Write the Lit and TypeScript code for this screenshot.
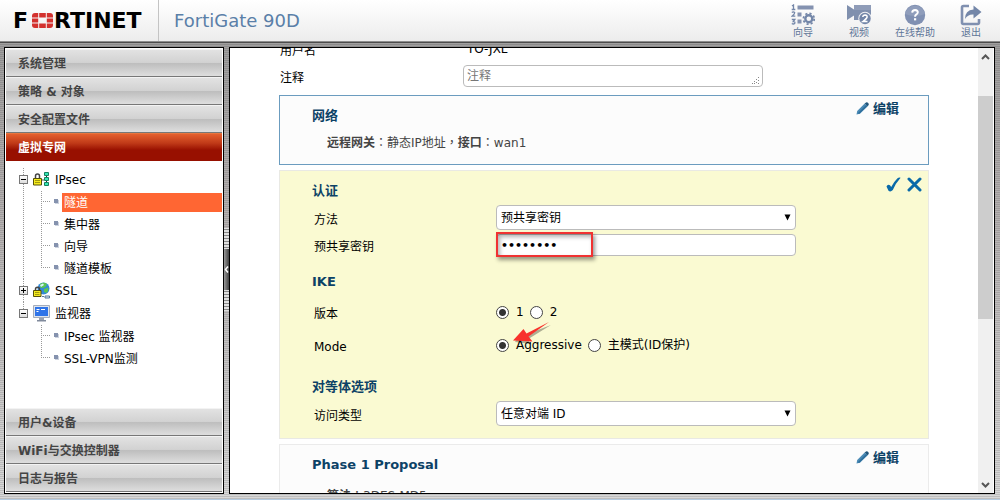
import { LitElement, html, css, svg, nothing } from "lit";
import { customElement, state } from "lit/decorators.js";
import { classMap } from "lit/directives/class-map.js";

const wizardIcon = svg`<svg viewBox="0 0 24 22" width="24" height="22">
  <path d="M6.5 1.5h16v4h-16zM6.5 8.500h4v4h-4zM6.500 15.500h4v4h-4z" fill="#8492b0"/>
  <g fill="none" stroke="#7386a8" stroke-width="1.300">
    <path d="M1 2l1.500-1v4.700M.7 5.500h3.600"/>
    <path d="M.8 8.500q1.500-1.200 2.800 0q.5 1.200-2.600 3.700h3.300"/>
    <path d="M.8 15.500h3l-1.500 2q2 0 1.500 1.700q-1.300 1.500-3 .2"/>
  </g>
  <circle cx="17.800" cy="14.800" r="3.500" fill="none" stroke="#7386a8" stroke-width="2.400"/>
  <circle cx="17.800" cy="14.800" r="5.400" fill="none" stroke="#7386a8" stroke-width="1.800" stroke-dasharray="2.120 2.120"/>
</svg>`;

const videoIcon = svg`<svg viewBox="0 0 24 22" width="24" height="22">
  <path d="M0 1l7 4.500V1h17v15H7v-4.500L0 16z" fill="#8090ae"/>
  <path d="M7 1h17v5H7z" fill="#8f9cb8"/>
  <circle cx="18" cy="14.500" r="6.700" fill="#f2f2f4"/>
  <circle cx="18" cy="14.500" r="5.700" fill="#7386a8"/>
  <path d="M15.800 13q.2-2 2.300-2q2.200.2 2 2q-.3 1.500-4.200 4.500h4.600" fill="none" stroke="#fff" stroke-width="1.500"/>
</svg>`;

const helpIcon = svg`<svg viewBox="0 0 22 22" width="22" height="22">
  <circle cx="11" cy="11" r="10.200" fill="#8090b2"/>
  <path d="M1 10a10.200 10.200 0 0 1 20 0q-10 4-20 0z" fill="#8f9dbb"/>
  <path d="M8.200 8.600q.1-2.700 2.900-2.700q2.700.1 2.700 2.400q-.1 1.500-1.700 2.400q-1 .6-1 2" fill="none" stroke="#fff" stroke-width="2"/>
  <path d="M10 14.200h2.200v2.200H10z" fill="#fff"/>
</svg>`;

const exitIcon = svg`<svg viewBox="0 0 22 22" width="22" height="22">
  <path d="M9 2H3.500Q2 2 2 3.500v15Q2 20 3.500 20h14q1.500 0 1.500-1.500V15" fill="none" stroke="#8090b0" stroke-width="2.600"/>
  <path d="M5 15Q5 6 13.500 5.500V1.500L21.500 8l-8 6.500V10.500Q8 10 5 15z" fill="#7386a8"/>
</svg>`;

const pencil = svg`<svg viewBox="0 0 13 13" width="13" height="13">
  <path d="M0.500 12.500L1.200 9L8.700 1.500L11.500 4.300L4 11.800z" fill="#4a8ab5"/>
  <path d="M3 12L11.500 4.300L10 3L2 11z" fill="#2f6f9c"/>
  <path d="M8.700 1.500L10 .5Q11.200 0 12.200 1Q13.200 2.200 12.500 3.200L11.500 4.300z" fill="#20557a"/>
</svg>`;

const ipsecIcon = svg`<svg viewBox="0 0 17 17" width="17" height="17">
  <path d="M2.500 7.500V5q0-2 2-2t2 2v2.500" fill="none" stroke="#444" stroke-width="1.500"/>
  <path d="M.5 7.500h8v6.500h-8z" fill="#f5ea1c" stroke="#55500a"/>
  <path d="M2 9.500h5M2 11.500h5" stroke="#a19a10"/>
  <path d="M9 9h2" stroke="#555"/>
  <path d="M11.500 1.500h4v3h-4zM11.500 6.500h4v3h-4zM11.500 11.500h4v3h-4z" fill="#35e6b4" stroke="#16805f"/>
  <path d="M13.500 5v1M13.500 10v1" stroke="#333"/>
</svg>`;

const sslIcon = svg`<svg viewBox="0 0 17 17" width="17" height="17">
  <circle cx="10.500" cy="6.500" r="6" fill="#328bd9"/>
  <path d="M7 2q4-2.500 7 0l-1 2.500-3 1.500-3-.5zM11 7l4-1.500q1 3-1.500 5.500L11 10z" fill="#5ac553"/>
  <path d="M7 3l3-1.500 1 1.500-3 2z" fill="#d8f2ff"/>
  <path d="M2.500 8.500V7.300q0-2 2-2t2 2v1.200" fill="none" stroke="#444" stroke-width="1.500"/>
  <path d="M.5 8.500h7.500v6H.5z" fill="#f5ea1c" stroke="#55500a"/>
  <path d="M2 10.500h4.500M2 12.500h4.500" stroke="#a19a10"/>
  <path d="M9 14.500h2m1-.5h4.500v2H12z" stroke="#56799c" fill="#dce8f5"/>
</svg>`;

const monitorIcon = svg`<svg viewBox="0 0 17 17" width="17" height="17">
  <path d="M.5 .5h16v12H.5z" fill="#dfe4ec" stroke="#a5adbb"/>
  <path d="M2 2h13v9H2z" fill="#2f74e8"/>
  <path d="M3.500 4.500h3M8 4.500h4M3.500 6.500h2" stroke="#fff"/>
  <path d="M6 13h5v2H6z" fill="#9aa2b2"/>
  <path d="M4 15h9v1.500H4z" fill="#808a9c"/>
</svg>`;

const check = svg`<svg viewBox="0 0 15 15" width="15" height="15">
  <path d="M.5 9.500Q1.500 7 4 8.200L5.200 10Q8 4.500 11.500 1.200Q13 .2 14.600 .8Q9.500 6.500 6.800 13Q4.500 15.500 2.500 13.700z" fill="#0a6aa8"/>
</svg>`;

const cross = svg`<svg viewBox="0 0 15 15" width="15" height="15">
  <path d="M2 2L13 13M13 2L2 13" stroke="#0a6aa8" stroke-width="3" stroke-linecap="round"/>
</svg>`;

const gridMark = svg`<svg viewBox="0 0 21 15" width="21" height="15">
  <g fill="#d3312e">
    <path d="M0 4.400V3Q0 0 3 0h3.200v4.400zM7.200 0h6.600v4.400H7.200zM14.800 0H18q3 0 3 3v1.400h-6.200z"/>
    <path d="M0 5.400h6.200v4.200H0zM14.800 5.400H21v4.200h-6.200z"/>
    <path d="M0 10.600h6.200V15H3q-3 0-3-3zM7.200 10.600h6.600V15H7.200zM14.800 10.600H21V12q0 3-3 3h-3.200z"/>
  </g>
</svg>`;

interface Branch {
  label: string;
  icon: unknown;
  open: boolean;
  leaves: string[];
}

@customElement("app-root")
export class AppRoot extends LitElement {
  @state() private selected = "隧道";

  private branches: Branch[] = [
    { label: "IPsec", icon: ipsecIcon, open: true, leaves: ["隧道", "集中器", "向导", "隧道模板"] },
    { label: "SSL", icon: sslIcon, open: false, leaves: [] },
    { label: "监视器", icon: monitorIcon, open: true, leaves: ["IPsec 监视器", "SSL-VPN监测"] },
  ];

  static styles = css`
    :host {
      display: flex;
      flex-direction: column;
      height: 100vh;
      box-sizing: border-box;
      overflow: hidden;
      font: 12px/20px "DejaVu Sans", "Noto Sans CJK SC", sans-serif;
      color: #000;
      border-bottom: 1px solid #b5cbe0;
      background:
        repeating-linear-gradient(rgba(0, 0, 0, 0.12) 0 1px, transparent 1px 2px),
        linear-gradient(#9a9a9a, #b4b0b0 40%, #d8d8d8);
    }
    * { box-sizing: border-box; }
    svg { display: block; flex: none; }
    button, input, select, textarea { font: inherit; color: inherit; margin: 0; }
    button { border: 0; background: none; padding: 0; cursor: pointer; text-align: left; }
    a { color: inherit; text-decoration: none; }

    header {
      display: flex;
      flex: none;
      height: 43px;
      background: linear-gradient(#fff, #ececec);
      border-bottom: 1px solid #4c4c4c;
      box-shadow: inset 0 -1px #8d8d8d;
    }
    .logo {
      display: flex;
      align-items: center;
      width: 159px;
      padding-left: 13px;
      border-right: 1px solid #c4c4c4;
      margin-bottom: 1px;
      font-size: 22px;
      font-weight: bold;
    }
    .logo svg { margin: 0 1px 0 4px; }
    .product { padding-left: 15px; font-size: 18px; line-height: 41px; color: #5a7fa8; flex: 1; }
    .tools { display: flex; padding-right: 1px; }
    .tool {
      display: flex;
      flex-direction: column;
      align-items: center;
      width: 56px;
      padding-top: 4px;
      font-size: 10px;
      line-height: 14px;
      color: #5f7698;
    }

    .body { display: flex; flex: 1; min-height: 0; padding: 4px 5px 5px 4px; }
    nav {
      display: flex;
      flex-direction: column;
      width: 220px;
      padding: 1px;
      background: #fff;
      border: 1px solid #000;
    }
    .section {
      flex: none;
      height: 28px;
      padding: 2px 0 0 12px;
      font-weight: bold;
      color: #444;
      border-top: 1px solid #f3f3f3;
      border-bottom: 1px solid #777;
      background: linear-gradient(#e2e2e2, #d2d2d2 48%, #bebebe 52%, #dedede);
    }
    .section.current {
      color: #fff;
      border-top-color: #e8753e;
      border-bottom-color: #961000;
      background: linear-gradient(#e4602f, #c03a18 35%, #981000 62%);
    }
    .tree { flex: 1; margin: 0; padding: 7px 0 0 13px; list-style: none; }
    .tree > li {
      background: repeating-linear-gradient(#999 0 1px, transparent 1px 2px) 4px 0 / 1px 100% no-repeat;
    }
    .tree > li:last-child { background-size: 1px 10px; }
    .branch { display: flex; align-items: center; height: 23px; }
    .toggle {
      position: relative;
      width: 9px;
      height: 9px;
      border: 1px solid #777;
      background: linear-gradient(#fff, #ddd);
    }
    .toggle::before, .toggle.plus::after {
      content: "";
      position: absolute;
      left: 1px;
      top: 3px;
      width: 5px;
      height: 1px;
      background: #000;
    }
    .toggle.plus::after { left: 3px; top: 1px; width: 1px; height: 5px; }
    .branch svg { margin: 0 5px 0 5px; }
    .leaves {
      margin: 0 0 0 22px;
      padding: 0;
      list-style: none;
      background: repeating-linear-gradient(#999 0 1px, transparent 1px 2px) 0 0 / 1px calc(100% - 12px) no-repeat;
    }
    .leaf { display: flex; align-items: center; height: 22px; }
    .leaf::before {
      content: "";
      width: 9px;
      height: 1px;
      margin-bottom: 2px;
      background: repeating-linear-gradient(90deg, #999 0 1px, transparent 1px 2px);
    }
    .leaf::after {
      content: "";
      order: 1;
      width: 4px;
      height: 4px;
      margin: 0 4px 3px 4px;
      background: #8592ae;
      box-shadow: 1px 1px #ccd2de;
    }
    .leaf a { order: 2; flex: 1; padding: 1px 0 0 2px; line-height: 18px; }
    .leaf a.on { background: #ff6633; color: #fff; }

    .splitter {
      display: flex;
      flex-direction: column;
      align-items: stretch;
      justify-content: center;
      width: 5px;
      padding-bottom: 2px;
    }
    .grip {
      height: 21px;
      background: radial-gradient(circle, #888 0.8px, transparent 1px) 0 0 / 2px 3px, #e0e0e0;
    }
    .collapse {
      display: flex;
      align-items: center;
      height: 41px;
      background: linear-gradient(90deg, #999, #444);
    }

    main { display: flex; flex: 1; min-width: 0; background: #fff; border: 1px solid #000; overflow: hidden; }
    .content { flex: 1; min-width: 0; padding: 0 49px; }
    .top { margin: -10px 0 8px; padding-left: 1px; }
    .row { display: grid; grid-template-columns: 182px minmax(0, 300px); align-items: center; min-height: 22px; }
    .top .row { grid-template-columns: 183px minmax(0, 300px); }
    .top .row + .row { margin-top: 5px; }
    .row > .name { padding-top: 4px; line-height: 18px; }
    .value { padding-left: 4px; }
    .field { position: relative; display: block; }
    .field input, .field select, .field textarea {
      display: block;
      width: 100%;
      height: 22px;
      padding: 0 4px;
      border: 1px solid #bbb;
      border-radius: 4px;
      background: #fff;
      outline: none;
      appearance: none;
    }
    .field input[type="password"] { font-size: 11px; font-weight: bold; }
    .field textarea { resize: none; overflow: hidden; padding: 0 3px; }
    .field textarea::placeholder { color: #777; opacity: 1; }
    .field select { height: 25px; }
    .field svg { position: absolute; right: 5px; top: 9px; }
    .field .corner { right: 3px; top: 12px; }

    .card { position: relative; margin-bottom: 5px; padding: 10px 32px 11px; border: 1px solid #ebebeb; background: #fcfcfc; }
    .card.focus { border-color: #6b9cbf; }
    .card.editing { background: #fafad2; padding-bottom: 12px; border-color: #e9e9e4; }
    h2 { margin: 0; font-size: 13px; line-height: 20px; color: #0c4266; }
    .summary { margin: 7px 0 0 15px; color: #444; }
    .summary.list { margin-top: 11px; }
    .punct { font-family: "Noto Sans CJK TC", sans-serif; line-height: 1; }
    .edit {
      position: absolute;
      top: 3px;
      right: 29px;
      display: flex;
      align-items: center;
      gap: 4px;
      font-size: 13px;
      font-weight: bold;
      color: #0c4266;
    }
    .edit svg { margin-bottom: 2px; }
    .actions { position: absolute; top: 6px; right: 6px; display: flex; gap: 6px; }
    .form { padding-left: 2px; }
    .form .row + .row { margin-top: 4px; }
    .form.select-first { margin-top: 4px; }
    .form.radios { margin-top: 8px; }
    .form.radios .row { min-height: 24px; }
    .form.radios .row + .row { margin-top: 9px; }
    .gap { margin-top: 16px; }
    .gap-wide { margin-top: 20px; }

    .choices { position: relative; display: flex; gap: 6px; white-space: nowrap; }
    .choices label { display: flex; align-items: center; gap: 7px; }
    .choices input {
      width: 13px;
      height: 13px;
      appearance: none;
      border: 1px solid #444;
      border-radius: 50%;
      background: #fff;
    }
    .choices input:checked { background: radial-gradient(circle, #333 3px, #fff 4px); }
    .highlight {
      position: absolute;
      left: 0;
      top: -2px;
      width: 97px;
      height: 25px;
      border: 2px solid #f03232;
      box-shadow: 2px 3px 4px rgba(0, 0, 0, 0.4), inset 2px 3px 4px rgba(0, 0, 0, 0.3);
      pointer-events: none;
    }
    .arrow { position: absolute; left: 16px; top: -15px; pointer-events: none; }

    .scrollbar {
      display: flex;
      flex-direction: column;
      align-items: center;
      width: 15px;
      margin-right: 1px;
      padding: 5px 0 4px;
      background: #f0f0f0;
    }
    .track { flex: 1; width: 100%; margin: 1px 0; padding-top: 34px; }
    .thumb { height: 58%; background: #cdcdcd; }
  `;

  private card(title: string, body: unknown, focus = false) {
    return html`<section class=${classMap({ card: true, focus })}>
      <h2>${title}</h2>
      <button class="edit">${pencil}<span>编辑</span></button>
      ${body}
    </section>`;
  }

  private selectRow(id: string, name: string, value: string) {
    return html`<div class="row">
      <label class="name" for=${id}>${name}</label>
      <span class="field">
        <select id=${id}><option>${value}</option></select>
        <svg viewBox="0 0 7 7" width="7" height="7"><path d="M.5 .5h6L3.500 6.500z" /></svg>
      </span>
    </div>`;
  }

  private radio(group: string, label: string, checked = false) {
    return html`<label><input type="radio" name=${group} .checked=${checked} /><span>${label}</span></label>`;
  }

  private section(label: string, current = false) {
    return html`<button class=${classMap({ section: true, current })}>${label}</button>`;
  }

  private chevron(d: string) {
    return html`<svg viewBox="0 0 9 8" width="9" height="8">
      <path d=${d} fill="none" stroke="#555" stroke-width="2" />
    </svg>`;
  }

  private pick(e: Event, leaf: string) {
    e.preventDefault();
    this.selected = leaf;
  }

  render() {
    return html`
      <header>
        <div class="logo"><span>F</span>${gridMark}<span>RTINET</span></div>
        <div class="product">FortiGate 90D</div>
        <div class="tools">
          <a class="tool" href="#">${wizardIcon}<span>向导</span></a>
          <a class="tool" href="#">${videoIcon}<span>视频</span></a>
          <a class="tool" href="#">${helpIcon}<span>在线帮助</span></a>
          <a class="tool" href="#">${exitIcon}<span>退出</span></a>
        </div>
      </header>
      <div class="body">
        <nav>
          ${this.section("系统管理")} ${this.section("策略 & 对象")} ${this.section("安全配置文件")}
          ${this.section("虚拟专网", true)}
          <ul class="tree">
            ${this.branches.map(
              (b) => html`<li>
                <div class="branch">
                  <span class=${classMap({ toggle: true, plus: !b.open })}></span>${b.icon}<a href="#">${b.label}</a>
                </div>
                ${b.open
                  ? html`<ul class="leaves">
                      ${b.leaves.map(
                        (l) => html`<li class="leaf">
                          <a href="#" class=${classMap({ on: l === this.selected })} @click=${(e: Event) => this.pick(e, l)}>${l}</a>
                        </li>`
                      )}
                    </ul>`
                  : nothing}
              </li>`
            )}
          </ul>
          ${this.section("用户&设备")} ${this.section("WiFi与交换控制器")} ${this.section("日志与报告")}
        </nav>
        <div class="splitter">
          <div class="grip"></div>
          <div class="collapse">
            <svg viewBox="0 0 5 7" width="5" height="7"><path d="M4 .5L1.500 3.500L4 6.500" fill="none" stroke="#fff" stroke-width="1.500" /></svg>
          </div>
          <div class="grip"></div>
        </div>
        <main>
          <div class="content">
            <div class="top">
              <div class="row"><span class="name">用户名</span><span class="value">TO-JXL</span></div>
              <div class="row">
                <label class="name" for="comment">注释</label>
                <span class="field">
                  <textarea id="comment" rows="1" placeholder="注释"></textarea>
                  <svg class="corner" viewBox="0 0 8 8" width="8" height="8">
                    <path d="M6 0h1v1H6zM4 2h1v1H4zM6 3h1v1H6zM2 4h1v1H2zM4 5h1v1H4zM0 6h1v1H0zM2 6h1v1H2zM6 6h1v1H6z" fill="#888" />
                  </svg>
                </span>
              </div>
            </div>

            ${this.card(
              "网络",
              html`<div class="summary"><b>远程网关</b><span class="punct">：</span>静态IP地址<span class="punct">，</span><b>接口</b><span class="punct">：</span>wan1</div>`,
              true
            )}

            <section class="card editing">
              <div class="actions">
                <button aria-label="确定">${check}</button>
                <button aria-label="取消">${cross}</button>
              </div>
              <h2>认证</h2>
              <div class="form select-first">
                ${this.selectRow("method", "方法", "预共享密钥")}
                <div class="row">
                  <label class="name" for="psk">预共享密钥</label>
                  <span class="field">
                    <input id="psk" type="password" value="12345678" />
                    <span class="highlight"></span>
                  </span>
                </div>
              </div>
              <h2 class="gap">IKE</h2>
              <div class="form radios">
                <div class="row" role="radiogroup" aria-label="版本">
                  <span class="name">版本</span>
                  <div class="choices">${this.radio("version", "1", true)}${this.radio("version", "2")}</div>
                </div>
                <div class="row" role="radiogroup" aria-label="Mode">
                  <span class="name">Mode</span>
                  <div class="choices">
                    ${this.radio("mode", "Aggressive", true)}${this.radio("mode", "主模式(ID保护)")}
                    <svg class="arrow" viewBox="0 0 42 26" width="42" height="26">
                      <path d="M3 22L19 24L15.500 19.500L39 5L12.500 15L11 11z" fill="#000" opacity=".3" />
                      <path d="M1 20.500L11.500 9L14.500 13.500L37 2L16.500 16.500L20.500 21.500z" fill="#f8322c" />
                    </svg>
                  </div>
                </div>
              </div>
              <h2 class="gap-wide">对等体选项</h2>
              <div class="form select-first">${this.selectRow("peer", "访问类型", "任意对端 ID")}</div>
            </section>

            ${this.card("Phase 1 Proposal", html`<div class="summary list"><b>算法</b><span class="punct">：</span>3DES-MD5</div>`)}
          </div>
          <div class="scrollbar">
            ${this.chevron("M1 6L4.500 2.500L8 6")}
            <div class="track"><div class="thumb"></div></div>
            ${this.chevron("M1 2L4.500 5.500L8 2")}
          </div>
        </main>
      </div>
    `;
  }
}
